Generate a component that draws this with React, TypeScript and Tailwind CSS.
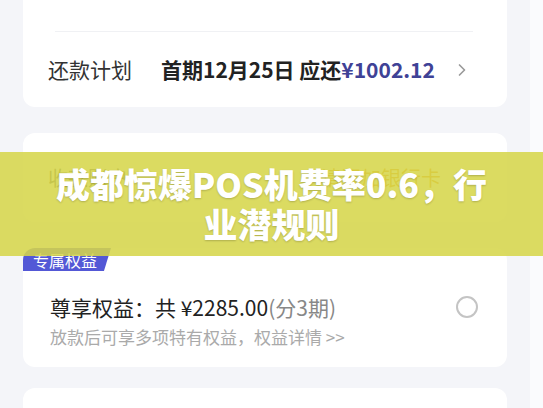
import { ChevronRight } from "lucide-react";

const font = "font-['Noto_Sans_CJK_SC','Noto_Sans',sans-serif]";

function RepayCard() {
	return (
		<div className="h-[107px] w-[484px] shrink-0 rounded-b-xl bg-white">
			<div className="h-[31px]" />
			<div className="ml-[32px] mr-[34px] h-px bg-[#f0f1f4]" />
			<div className="flex h-[75px] items-center pl-[25px] text-[21px] leading-none">
				<span className="text-[#333]">还款计划</span>
				<span className="ml-[29px] font-bold text-[#222]">首期12月25日 应还</span>
				<span className="font-bold text-[#3f4296]">¥1002.12</span>
				<ChevronRight className="ml-[17px] h-5 w-5 text-[#999]" strokeWidth={2} />
			</div>
		</div>
	);
}

function AccountCard() {
	return (
		<div className="mt-[26px] flex h-[89px] w-[484px] shrink-0 items-center rounded-xl bg-white pl-[25px] pr-[38px] text-[20px]">
			<span className="text-[#555]">收款账户</span>
			<span className="ml-auto text-[#e8960f]">请添加银行卡</span>
			<ChevronRight className="ml-2 h-5 w-5 text-[#aaa]" />
		</div>
	);
}

function BenefitCard() {
	return (
		<div className="relative mt-[26px] h-[119px] w-[484px] shrink-0 rounded-xl bg-white">
			<div className="absolute left-0 top-0 flex h-[23px] w-[88px] items-center rounded-tl-xl rounded-br-[3px] bg-[#5358d6] pl-[10px] text-[16px] leading-none text-white [clip-path:polygon(0_0,100%_0,92%_100%,0_100%)]">
				专属权益
			</div>
			<div className="flex items-start justify-between pl-[27px] pr-[29px] pt-[46px]">
				<div className="flex flex-col">
					<div className="text-[21px] leading-[26px] text-[#222]">
						尊享权益：共 ¥2285.00<span className="text-[#888]">(分3期)</span>
					</div>
					<div className="mt-[6px] text-[17px] leading-[22px] text-[#aaa]">
						放款后可享多项特有权益，权益详情 &gt;&gt;
					</div>
				</div>
				<div className="mt-[2px] h-[22px] w-[22px] rounded-full border-2 border-[#c4c4c4]" />
			</div>
		</div>
	);
}

export default function App() {
	return (
		<div className={`relative flex h-[408px] w-[543px] overflow-hidden bg-[#fafbfd] ${font}`}>
			<div className="flex h-full w-[530px] flex-col bg-[#f4f5f9] pl-[23px]">
				<RepayCard />
				<AccountCard />
				<BenefitCard />
				<div className="mt-[21px] h-[60px] w-[484px] shrink-0 rounded-xl bg-white" />
			</div>
			<div className="absolute left-0 top-[152px] flex h-[104px] w-full flex-col items-center justify-center bg-[rgba(214,214,73,0.87)] text-center text-[34px] font-black leading-[40px] text-white [text-shadow:0_1px_2px_rgba(0,0,0,0.2)]">
				<div>成都惊爆POS机费率0.6，行</div>
				<div>业潜规则</div>
			</div>
		</div>
	);
}
